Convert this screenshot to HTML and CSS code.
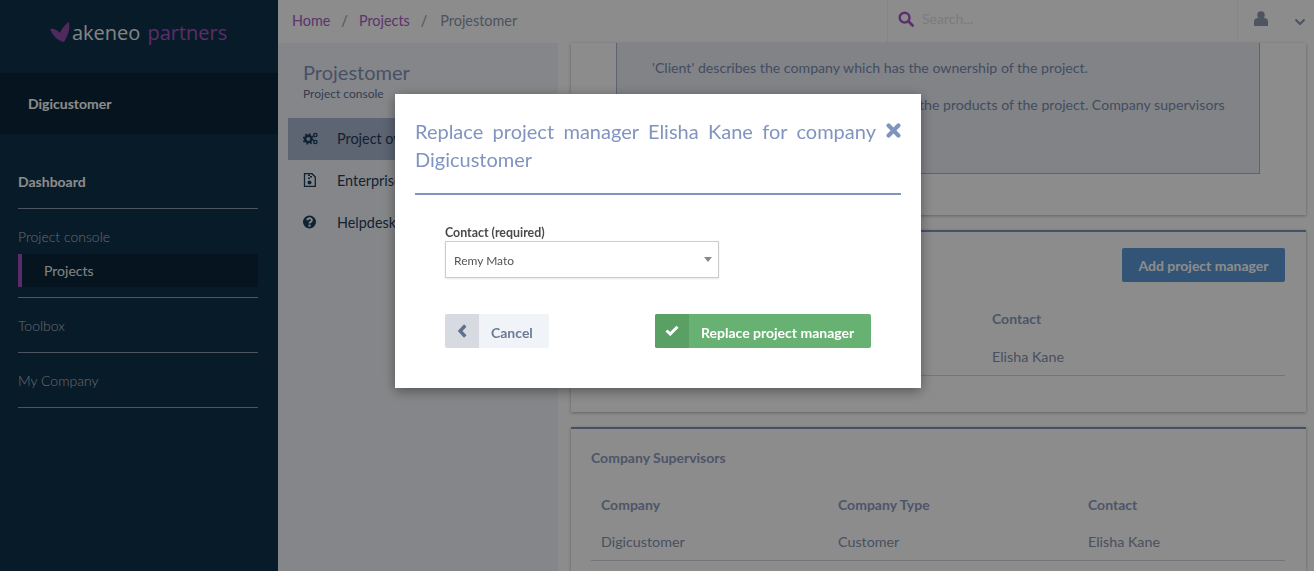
FILE: index.html
```html
<!DOCTYPE html>
<html lang="en">

<head>
    <meta charset="UTF-8">
    <meta name="viewport" content="width=device-width, initial-scale=1.0">
    <link rel="stylesheet" href="styles.css">
    <title>Replace project manager</title>
</head>

<body>

    <div class="page">
        <aside class="sidebar">
            <div class="logo">
                <svg class="logo-icon" width="22" height="20" viewBox="0 0 22 20">
                    <path d="M0 7 C4 6 7 8 10 11 C12 7 14 3 19 0 C20 6 19 12 14 20 C9 19 3 15 0 7Z" />
                </svg>
                <span class="logo-name">akeneo</span>
                <span class="logo-partners">partners</span>
            </div>
            <div class="sidebar-company">Digicustomer</div>
            <nav class="sidebar-nav">
                <div class="nav-group nav-group-first"><a class="nav-strong">Dashboard</a></div>
                <div class="nav-group nav-group-open">
                    <a class="nav-title">Project console</a>
                    <a class="nav-sub">Projects</a>
                </div>
                <div class="nav-group"><a class="nav-title">Toolbox</a></div>
                <div class="nav-group"><a class="nav-title">My Company</a></div>
            </nav>
        </aside>

        <div class="content">
            <header class="topbar">
                <div class="breadcrumb">
                    <a>Home</a><span class="sep">/</span><a>Projects</a><span class="sep">/</span><span class="current">Projestomer</span>
                </div>
                <div class="search">
                    <svg width="16" height="16" viewBox="0 0 17 17">
                        <circle cx="7" cy="7" r="5.2" fill="none" stroke="#a85cc8" stroke-width="2.6" />
                        <path d="M11 11 L15.5 15.5" stroke="#a85cc8" stroke-width="3" stroke-linecap="round" />
                    </svg>
                    <span class="search-text">Search...</span>
                </div>
                <div class="user">
                    <svg width="14" height="15" viewBox="0 0 14 15">
                        <circle cx="7" cy="4" r="3.8" fill="#8f9ab0" />
                        <path d="M0 15 V10.5 C0 8 2 7 4 7 H10 C12 7 14 8 14 10.5 V15Z" fill="#8f9ab0" />
                    </svg>
                    <svg class="user-arrow" width="12" height="8" viewBox="0 0 12 8">
                        <path d="M1.5 1.5 L6 6 L10.5 1.5" fill="none" stroke="#8f9ab0" stroke-width="2.2" />
                    </svg>
                </div>
            </header>

            <div class="columns">
                <section class="project-menu">
                    <h1 class="project-title">Projestomer</h1>
                    <div class="project-sub">Project console</div>
                    <ul class="menu">
                        <li class="menu-item menu-active">
                            <svg width="15" height="13" viewBox="0 0 17 14">
                                <circle cx="6" cy="7.5" r="3.6" fill="none" stroke="#1a3f5e" stroke-width="2.8" />
                                <circle cx="6" cy="7.5" r="5.6" fill="none" stroke="#1a3f5e" stroke-width="1.6" stroke-dasharray="2 2.4" />
                                <circle cx="14" cy="3" r="1.9" fill="none" stroke="#1a3f5e" stroke-width="1.5" />
                                <circle cx="14" cy="11" r="1.9" fill="none" stroke="#1a3f5e" stroke-width="1.5" />
                            </svg>
                            <span>Project overview</span>
                        </li>
                        <li class="menu-item">
                            <svg width="15" height="14" viewBox="0 0 15 14">
                                <path d="M1.5 .7 H9 L12.3 4 V13.3 H1.5Z" fill="none" stroke="#1a3f5e" stroke-width="1.3" />
                                <path d="M5 1.5 H7 V3 H5Z M7 3 H9 V4.5 H7Z M5 4.5 H7 V6 H5Z" fill="#1a3f5e" />
                                <circle cx="6.5" cy="9.6" r="2" fill="#1a3f5e" />
                            </svg>
                            <span>Enterprise</span>
                        </li>
                        <li class="menu-item">
                            <svg width="15" height="14" viewBox="0 0 15 14">
                                <circle cx="6.5" cy="7" r="6.5" fill="#1a3f5e" />
                                <path d="M4.2 5.3 C4.4 2.6 8.9 2.6 8.9 5.2 C8.9 7 6.5 6.8 6.5 8.5" fill="none" stroke="#f3f5f9" stroke-width="1.9" />
                                <path d="M5.4 9.6 H7.6 V11.6 H5.4Z" fill="#f3f5f9" />
                            </svg>
                            <span>Helpdesk</span>
                        </li>
                    </ul>
                </section>

                <main class="cards">
                    <section class="card card-intro">
                        <div class="callout">
                            <p>'Client' describes the company which has the ownership of the project.</p>
                            <p>'Supervisors' are the people who supervise the products of the project. Company supervisors are optional.</p>
                        </div>
                    </section>

                    <section class="card card-table card-managers">
                        <div class="card-head">
                            <button class="add-button">Add project manager</button>
                        </div>
                        <table class="data-table table-managers">
                            <thead>
                                <tr><th></th><th></th><th>Contact</th></tr>
                            </thead>
                            <tbody>
                                <tr><td></td><td></td><td>Elisha Kane</td></tr>
                            </tbody>
                        </table>
                    </section>

                    <section class="card card-table card-supervisors">
                        <h2 class="card-title card-title-top">Company Supervisors</h2>
                        <table class="data-table table-supervisors">
                            <thead>
                                <tr><th>Company</th><th>Company Type</th><th>Contact</th></tr>
                            </thead>
                            <tbody>
                                <tr><td>Digicustomer</td><td>Customer</td><td>Elisha Kane</td></tr>
                            </tbody>
                        </table>
                    </section>
                </main>
            </div>
        </div>
    </div>

    <div class="overlay">
        <div class="modal">
            <div class="modal-head">
                <h2 class="modal-title">Replace project manager Elisha Kane for company Digicustomer</h2>
                <svg class="modal-close" width="15" height="15" viewBox="0 0 15 15">
                    <path d="M2.6 2.6 L12.4 12.4 M12.4 2.6 L2.6 12.4" stroke="#7f94bf" stroke-width="4.2" stroke-linecap="round" />
                </svg>
            </div>
            <form class="modal-form">
                <label class="field-label" for="contact">Contact (required)</label>
                <div class="select-wrap">
                    <select id="contact" class="field-select">
                        <option>Remy Mato</option>
                    </select>
                </div>
                <div class="modal-actions">
                    <button type="button" class="btn btn-cancel">
                        <span class="btn-icon">
                            <svg width="11" height="16" viewBox="0 0 10 14">
                                <path d="M7.5 2 L2.8 7 L7.5 12" fill="none" stroke="#5f6f8f" stroke-width="3" />
                            </svg>
                        </span>
                        <span class="btn-text">Cancel</span>
                    </button>
                    <button type="button" class="btn btn-confirm">
                        <span class="btn-icon">
                            <svg width="14" height="11" viewBox="0 0 14 11">
                                <path d="M1.5 5.5 L5.2 9 L12.5 1.8" fill="none" stroke="#fff" stroke-width="3" />
                            </svg>
                        </span>
                        <span class="btn-text">Replace project manager</span>
                    </button>
                </div>
            </form>
        </div>
    </div>

</body>

</html>
```

FILE: styles.css
```css
* {
    box-sizing: border-box;
}

html,
body {
    height: 100%;
}

body {
    margin: 0;
    overflow: hidden;
    font-family: Lato, 'Open Sans', sans-serif;
    font-size: 14px;
    color: #5f6f8f;
    background-color: #fff;
}

.page {
    display: flex;
    height: 571px;
    overflow: hidden;
}

/* sidebar */
.sidebar {
    flex: 0 0 278px;
    background-color: #10324b;
    color: #fff;
}

.logo {
    display: flex;
    align-items: center;
    height: 73px;
    padding: 0 0 9px 50px;
    font-family: 'Open Sans', sans-serif;
    font-size: 20px;
}

.logo-icon {
    fill: #8e4fa8;
}

.logo-name {
    color: #f0f0f0;
    margin-right: 7px;
}

.logo-partners {
    color: #a452c4;
}

.sidebar-company {
    height: 61px;
    line-height: 61px;
    padding-left: 28px;
    font-weight: bold;
    font-size: 14px;
    color: #fff;
    background-color: #0b2639;
}

.sidebar-nav {
    padding: 0 20px 0 18px;
}

.nav-group {
    border-bottom: 1px solid #8e99ad;
    padding: 18px 0 16px;
}

.nav-group a {
    display: block;
}

.nav-group-first {
    padding: 38px 0 16px;
}

.nav-group-open {
    padding-bottom: 10px;
}

.nav-strong {
    font-weight: bold;
    line-height: 20px;
    color: #fff;
}

.nav-title {
    line-height: 20px;
    font-weight: 300;
    color: #b8c0cc;
}

.nav-sub {
    margin-top: 7px;
    height: 33px;
    line-height: 33px;
    padding-left: 22px;
    color: #eee;
    background-color: #0b2639;
    border-left: 4px solid #a04fc0;
}

/* top bar */
.content {
    flex: 1;
    display: flex;
    flex-direction: column;
    min-width: 0;
}

.topbar {
    flex: 0 0 43px;
    display: flex;
    align-items: stretch;
    background-color: #fff;
}

.breadcrumb {
    flex: 1;
    padding: 12px 0 0 14px;
    font-size: 14.4px;
    color: #8c95a8;
}

.breadcrumb a {
    color: #a860c4;
}

.sep {
    margin: 0 11px;
}

.current {
    margin-left: 2px;
    color: #8e97aa;
}

.search {
    flex: 0 0 350px;
    display: flex;
    gap: 8px;
    padding: 11px 0 0 10px;
    border-left: 1px solid #f4f4f4;
}

.search-text {
    color: #dfe1e6;
    line-height: 16px;
}

.user {
    flex: 0 0 77px;
    display: flex;
    gap: 26px;
    padding: 11px 0 0 16px;
    border-left: 1px solid #f4f4f4;
}

.user-arrow {
    margin-top: 7px;
}

/* project menu */
.columns {
    flex: 1;
    display: flex;
    min-height: 0;
}

.project-menu {
    flex: 0 0 280px;
    padding: 17px 0 0 10px;
    background-color: #f3f5f9;
}

.project-title {
    margin: 0 0 0 15px;
    font-size: 20px;
    line-height: 24px;
    font-weight: normal;
    color: #8294bb;
}

.project-sub {
    margin: 2px 0 0 15px;
    font-size: 12px;
    line-height: 16px;
    color: #5f6f8f;
}

.menu {
    list-style: none;
    margin: 16px 0 0;
    padding: 0;
}

.menu-item {
    display: flex;
    align-items: center;
    gap: 19px;
    height: 42px;
    padding: 0 0 2px 15px;
    font-size: 14.4px;
    color: #1c3f5c;
}

.menu-item svg {
    flex: 0 0 15px;
}

.menu-active {
    background-color: #a9b6d0;
}

/* cards */
.cards {
    flex: 1;
    padding: 0 8px 0 13px;
    min-width: 0;
}

.card {
    background-color: #fff;
    box-shadow: 0 1px 3px rgba(0, 0, 0, 0.3);
    margin-bottom: 15px;
}

.card-intro {
    height: 172px;
    padding: 0 46px 0 45px;
}

.callout {
    height: 131px;
    padding: 15px 30px 0 35px;
    background-color: #eceff6;
    border: 1px solid #a8b5d2;
    border-top: none;
    font-size: 14.15px;
    line-height: 19px;
    color: #7b8cb0;
}

.callout p {
    margin: 0 0 18px;
}

.card-table {
    border-top: 2px solid #8294bb;
    padding: 0 21px 0 20px;
}

.card-managers {
    height: 182px;
}

.card-supervisors {
    padding-bottom: 40px;
}

.card-head {
    display: flex;
    justify-content: flex-end;
    align-items: center;
    padding-top: 16px;
}

.card-title {
    margin: 0;
    font-size: 14px;
    font-weight: bold;
    color: #8d9cc0;
}

.card-title-top {
    padding-top: 20px;
    line-height: 18px;
}

.add-button {
    width: 163px;
    height: 34px;
    border: none;
    border-radius: 2px;
    font-family: inherit;
    font-size: 14px;
    font-weight: bold;
    color: #fff;
    background-color: #5c9ad8;
}

.data-table {
    width: 100%;
    border-collapse: collapse;
    table-layout: fixed;
}

.data-table th {
    height: 37px;
    padding: 0 10px;
    text-align: left;
    font-weight: bold;
    color: #8d9cc0;
}

.data-table td {
    height: 37px;
    padding: 0 10px;
    border-bottom: 1px solid #d2d6de;
    font-size: 14.3px;
    color: #8592ac;
}

.table-managers {
    margin-top: 17px;
}

.table-managers th {
    height: 38px;
}

.table-managers td {
    height: 38px;
    padding-top: 2px;
}

.table-managers th:nth-child(1),
.table-managers th:nth-child(2) {
    width: 195.5px;
}

.table-supervisors {
    margin-top: 19px;
}

.table-supervisors th:nth-child(1) {
    width: 237px;
}

.table-supervisors th:nth-child(2) {
    width: 250px;
}

/* modal */
.overlay {
    position: fixed;
    inset: 0;
    padding: 94px 0 0 395px;
    background-color: rgba(0, 0, 0, 0.45);
}

.modal {
    width: 526px;
    height: 294px;
    padding: 0 20px;
    background-color: #fff;
    box-shadow: 0 3px 12px rgba(0, 0, 0, 0.4);
}

.modal-head {
    display: flex;
    gap: 10px;
    height: 101px;
    padding-top: 23px;
    border-bottom: 2px solid #8094bf;
}

.modal-title {
    flex: 1;
    margin: 0;
    font-size: 20px;
    line-height: 28px;
    font-weight: normal;
    text-align: justify;
    color: #8094bf;
}

.modal-close {
    flex: 0 0 15px;
    margin-top: 6px;
}

.modal-form {
    padding: 30px 30px 0;
}

.field-label {
    display: block;
    font-size: 12.4px;
    line-height: 16px;
    font-weight: bold;
    color: #4a4a4a;
}

.select-wrap {
    position: relative;
    width: 274px;
}

.select-wrap::after {
    content: "";
    position: absolute;
    top: 16px;
    right: 7px;
    border-left: 4px solid transparent;
    border-right: 4px solid transparent;
    border-top: 5px solid #888;
}

.field-select {
    display: block;
    width: 100%;
    height: 37px;
    padding: 2px 8px 0;
    appearance: none;
    border: 1px solid #ccc;
    border-radius: 0;
    box-shadow: 0 1px 2px rgba(0, 0, 0, 0.1);
    background-color: #fff;
    font-family: inherit;
    font-size: 12px;
    color: #555;
}

.modal-actions {
    display: flex;
    justify-content: space-between;
    width: 426px;
    margin-top: 36px;
}

.btn {
    display: flex;
    height: 34px;
    padding: 0;
    border: none;
    border-radius: 2px;
    overflow: hidden;
    font-family: inherit;
    font-size: 14px;
    font-weight: bold;
}

.btn-icon {
    flex: 0 0 34px;
    display: flex;
    align-items: center;
    justify-content: center;
    padding-bottom: 1px;
}

.btn-text {
    line-height: 38px;
}

.btn-cancel {
    width: 104px;
    color: #6b7a96;
    background-color: #f0f3f8;
}

.btn-cancel .btn-icon {
    background-color: #d8dae1;
}

.btn-cancel .btn-text {
    padding-left: 12px;
}

.btn-confirm {
    width: 216px;
    color: #fff;
    background-color: #67b273;
}

.btn-confirm .btn-icon {
    background-color: #5aa065;
}

.btn-confirm .btn-text {
    padding-left: 12px;
}
```
